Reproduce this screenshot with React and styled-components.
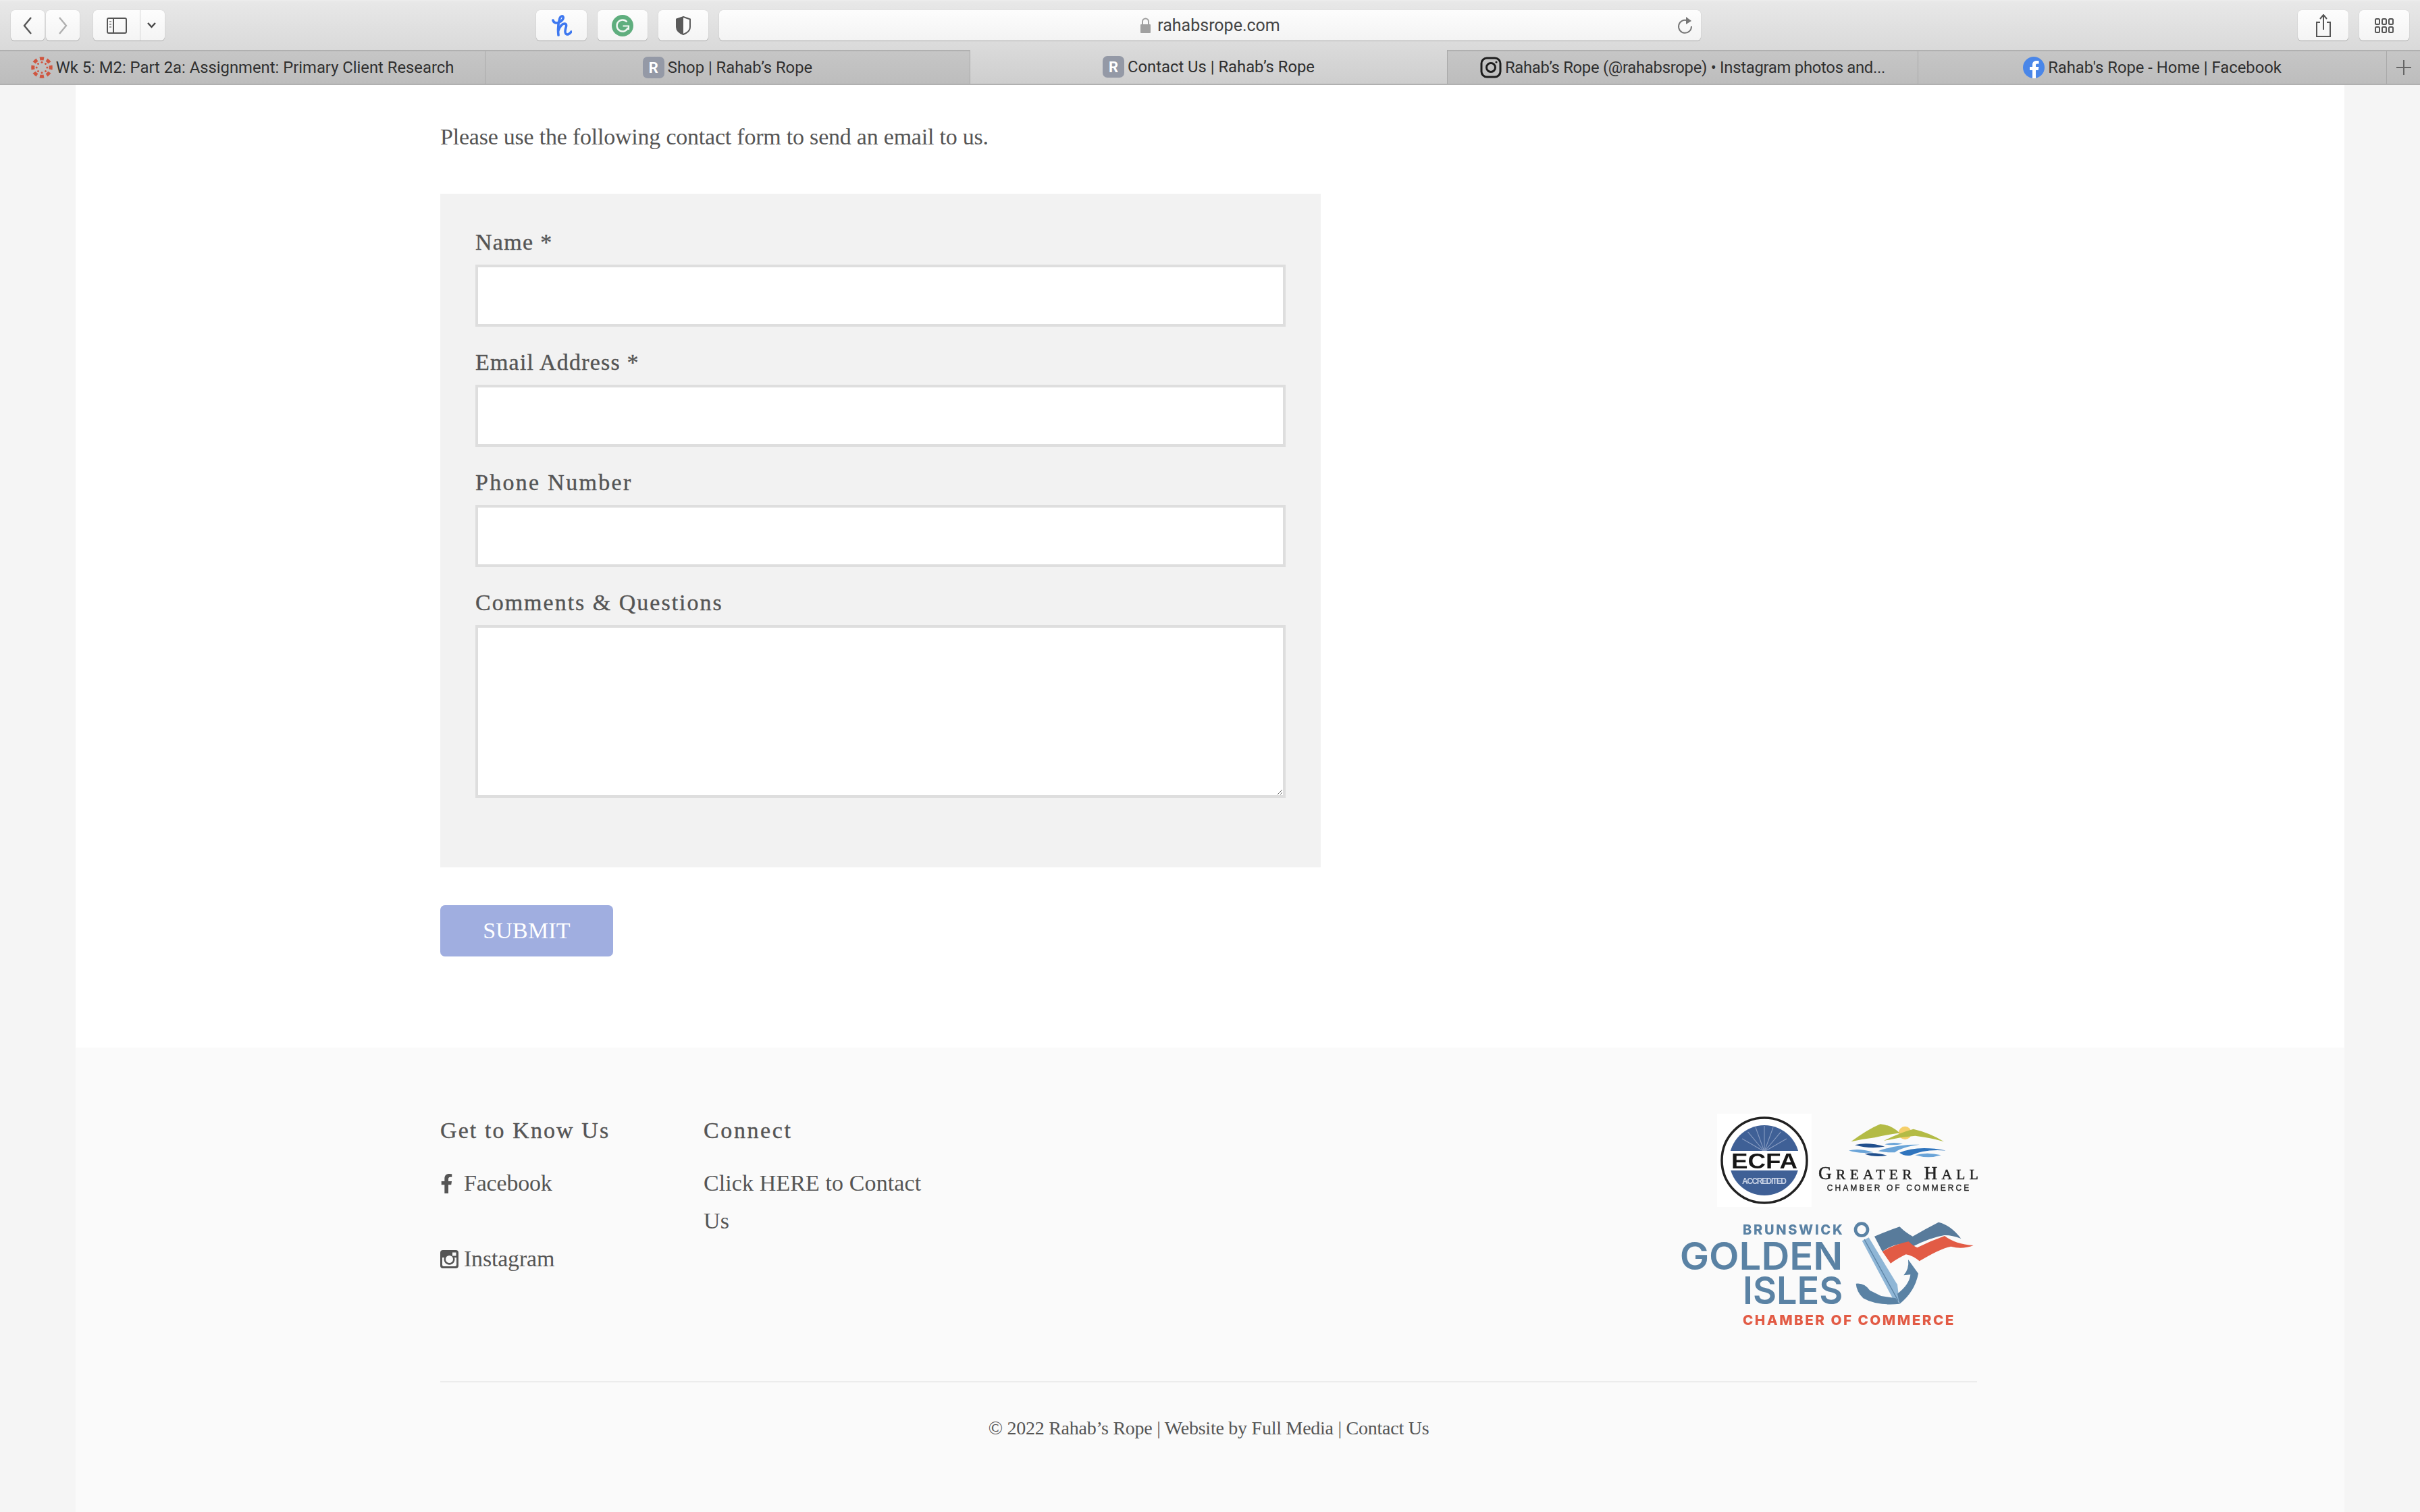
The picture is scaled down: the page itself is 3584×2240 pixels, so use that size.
import React from "react";
import styled, { createGlobalStyle } from "styled-components";
import { FaFacebookF } from "react-icons/fa";

const Global = createGlobalStyle`
  html, body { margin: 0; padding: 0; background: #f5f5f5; }
  * { box-sizing: border-box; }
`;

const Page = styled.div`
  width: 3584px;
  height: 2240px;
  overflow: hidden;
  display: flex;
  flex-direction: column;
  font-family: "Liberation Serif", serif;
  color: #555;
`;

const Chrome = styled.header`
  flex: none;
  height: 126px;
  display: flex;
  flex-direction: column;
  font-family: Roboto, "Liberation Sans", sans-serif;
  background: linear-gradient(#e8e8e8, #cfcfcf);
  border-top: 2px solid #ececec;
  border-bottom: 2px solid #b0b0b0;
`;

const Toolbar = styled.div`
  flex: none;
  height: 72px;
  padding: 13px 0 0 16px;
  display: flex;
  align-items: flex-start;
`;

const ToolButton = styled.div`
  flex: none;
  width: ${(p) => p.$w}px;
  height: 45px;
  margin-left: ${(p) => p.$ml || 0}px;
  display: flex;
  align-items: center;
  justify-content: center;
  background: linear-gradient(#fdfdfd, #f4f4f4);
  border-radius: 6px;
  box-shadow: 0 1px 1px #a8a8a8, 0 0 1px #bbb;
`;

const SplitPart = styled.div`
  height: 100%;
  width: ${(p) => p.$w}px;
  padding-right: ${(p) => (p.$divide ? "4px" : "0")};
  display: flex;
  align-items: center;
  justify-content: center;
  border-left: ${(p) => (p.$divide ? "1px solid #d5d5d5" : "none")};
`;

const UrlBar = styled.div`
  flex: none;
  position: relative;
  width: 1454px;
  height: 45px;
  margin-left: 16px;
  display: flex;
  align-items: center;
  justify-content: center;
  gap: 9px;
  background: linear-gradient(#fdfdfd, #f3f3f3);
  border-radius: 6px;
  box-shadow: 0 1px 1px #a8a8a8, 0 0 1px #bbb;
  font-size: 25px;
  color: #444;
`;

const Reload = styled.svg`
  position: absolute;
  right: 11px;
  top: 9px;
`;

const TabRow = styled.div`
  flex: 1;
  display: grid;
  grid-template-columns: 719px 718px 707px 697px 694px 1fr;
  border-top: 2px solid #b0b0b0;
`;

const Tab = styled.div`
  display: flex;
  align-items: center;
  justify-content: center;
  gap: 5px;
  font-size: 23.8px;
  letter-spacing: ${(p) => p.$track || 0}px;
  color: #303030;
  white-space: nowrap;
  background: ${(p) => (p.$active ? "linear-gradient(#d9d9d9, #cecece)" : "linear-gradient(#c6c6c6, #bdbdbd)")};
  border-right: 1px solid #a9a9a9;
  margin-top: ${(p) => (p.$active ? "-2px" : "0")};
`;

const RoundFav = styled.span`
  flex: none;
  width: 32px;
  height: 32px;
  border-radius: 7px;
  background: #9499a6;
  color: #fff;
  font-weight: 700;
  font-size: 22px;
  display: flex;
  align-items: center;
  justify-content: center;
`;

const AddTab = styled.div`
  background: linear-gradient(#c6c6c6, #bdbdbd);
  display: flex;
  align-items: center;
  justify-content: center;
`;

const Panel = styled.main`
  flex: none;
  width: 3360px;
  height: 1426px;
  margin-left: 112px;
  padding: 52px 540px 0;
  background: #fff;
`;

const Intro = styled.p`
  margin: 0 0 59px;
  font-size: 34px;
  line-height: 50px;
  letter-spacing: -0.22px;
`;

const FormBox = styled.form`
  width: 1304px;
  height: 998px;
  padding: 45px 52px 0;
  background: #f2f2f2;
  display: flex;
  flex-direction: column;
`;

const Label = styled.label`
  display: block;
  font-size: 34px;
  line-height: 54px;
  height: 60px;
  letter-spacing: ${(p) => p.$track}px;
  -webkit-text-stroke: 0.4px #555;
`;

const Field = styled.input`
  display: block;
  width: 1200px;
  height: 92px;
  margin-bottom: 26px;
  border: 4px solid #dedede;
  border-radius: 0;
  outline: none;
  background: #fff;
`;

const Comments = styled.textarea`
  display: block;
  width: 1200px;
  height: 256px;
  border: 4px solid #dedede;
  border-radius: 0;
  outline: none;
  background: #fff;
`;

const Submit = styled.button`
  display: block;
  width: 256px;
  height: 76px;
  margin-top: 56px;
  border: none;
  border-radius: 7px;
  background: #a0aee0;
  color: #fff;
  font-family: "Liberation Serif", serif;
  font-size: 34px;
  letter-spacing: 0.2px;
`;

const Footer = styled.footer`
  flex: none;
  width: 3360px;
  height: 688px;
  margin-left: 112px;
  padding: 95px 544px 0 540px;
  background: #fafafa;
`;

const FooterTop = styled.div`
  height: 401px;
  display: flex;
  border-bottom: 2px solid #ececec;
`;

const Column = styled.div`
  flex: none;
  width: ${(p) => p.$w}px;
`;

const ColHead = styled.h4`
  margin: 0 0 22px;
  font-size: 34px;
  line-height: 56px;
  font-weight: 400;
  letter-spacing: ${(p) => p.$track}px;
  -webkit-text-stroke: 0.4px #555;
`;

const SocialLink = styled.a`
  display: flex;
  align-items: center;
  height: 56px;
  margin-bottom: 56px;
  font-size: 34px;
  letter-spacing: -0.2px;
  color: #555;
`;

const IconSlot = styled.span`
  flex: none;
  width: 35px;
  display: flex;
  align-items: center;
`;

const FbGlyph = styled(FaFacebookF)`
  margin-left: -5px;
  color: #555;
`;

const ContactText = styled.p`
  margin: 0;
  font-size: 34px;
  line-height: 56px;
  letter-spacing: 0.1px;
`;

const Logos = styled.div`
  margin-left: auto;
  margin-right: -4px;
  margin-top: 3px;
  width: 446px;
  display: flex;
  flex-direction: column;
`;

const LogoRow = styled.div`
  display: flex;
  align-items: flex-start;
  padding-left: 57px;
  gap: 10px;
`;

const LogoSvg = styled.svg`
  flex: none;
  display: block;
  filter: blur(${(p) => p.$blur || 0.4}px);
`;

const HallSvg = styled(LogoSvg)`
  margin-top: 11px;
`;

const GoldenSvg = styled(LogoSvg)`
  margin-top: 22px;
`;

const Copyright = styled.p`
  margin: 0;
  padding-top: 43px;
  text-align: center;
  font-size: 28px;
  line-height: 50px;
  letter-spacing: -0.25px;
`;

function Chevron({ flip, color }) {
  return (
    <svg width="16" height="26" viewBox="0 0 16 26" fill="none">
      <path d={flip ? "M3 1l10 12L3 25" : "M13 1L3 13l10 12"} stroke={color} strokeWidth="2.4" />
    </svg>
  );
}

function HoneyIcon() {
  return (
    <svg width="30" height="33" viewBox="0 0 30 33" fill="none" stroke="#3e78f0" strokeWidth="3.6" strokeLinecap="round">
      <path d="M2 9c1 4 5 5 9 3 5-2 7-6 6-8-1-2-4-1-5 2-2 6-3 16-2 25" />
      <path d="M10 24c2-6 6-10 9-10 3 0 3 3 2 6-1 4-2 7 0 9 2 2 5 1 8-3" />
    </svg>
  );
}

function GrammarlyIcon() {
  return (
    <svg width="32" height="32" viewBox="0 0 32 32">
      <circle cx="16" cy="16" r="16" fill="#5fae7e" />
      <path d="M22.500 10.500A8.500 8.500 0 1 0 24 19" fill="none" stroke="#f4f8f5" strokeWidth="2.4" />
      <path d="M16.500 16.500H25V22" fill="none" stroke="#f4f8f5" strokeWidth="2.2" />
    </svg>
  );
}

function ShieldIcon() {
  return (
    <svg width="26" height="30" viewBox="0 0 26 30">
      <path d="M13 2l10 3.500V17q0 7-10 11Q3 24 3 17V5.500z" fill="#fbfbfb" stroke="#5a5a5a" strokeWidth="2" />
      <path d="M13 2L3 5.500V17q0 7 10 11z" fill="#5a5a5a" />
    </svg>
  );
}

function CanvasFav() {
  const spokes = [0, 45, 90, 135, 180, 225, 270, 315];
  return (
    <svg width="32" height="32" viewBox="0 0 32 32">
      {spokes.map((a) => (
        <g key={a} transform={`rotate(${a} 16 16)`} fill="#cf5640">
          <path d="M12.500 .5Q16 0 19.500 .5L18.500 5.500Q16 5 13.500 5.500z" />
          <circle cx="16" cy="8.200" r="1.500" />
        </g>
      ))}
    </svg>
  );
}

function InstaFav() {
  return (
    <svg width="32" height="32" viewBox="0 0 32 32" fill="none" stroke="#1d1d1d">
      <rect x="2" y="2" width="28" height="28" rx="8" strokeWidth="3" />
      <circle cx="16" cy="16" r="6.500" strokeWidth="3" />
      <circle cx="24" cy="8" r="1.600" fill="#1d1d1d" stroke="none" />
    </svg>
  );
}

function FacebookFav() {
  return (
    <svg width="32" height="32" viewBox="0 0 32 32">
      <circle cx="16" cy="16" r="16" fill="#4a86e8" />
      <path d="M14 32V20h-4v-5h4v-3c0-4 2.500-6 6-6h3.500v4.500H21c-1.500 0-2 .8-2 2V15h4.500l-.8 5H19v12z" fill="#fff" />
    </svg>
  );
}

function InstaOld() {
  return (
    <svg width="27" height="27" viewBox="0 0 27 27">
      <path fillRule="evenodd" fill="#555" d="M4 0h19a4 4 0 0 1 4 4v19a4 4 0 0 1-4 4H4a4 4 0 0 1-4-4V4a4 4 0 0 1 4-4zM3 11v11a2 2 0 0 0 2 2h17a2 2 0 0 0 2-2V11h-3a8 8 0 1 1-15 0zM18 3.500v5h5.500v-5zM13.500 8a5.500 5.500 0 1 0 0 11 5.500 5.500 0 0 0 0-11z" />
    </svg>
  );
}

function EcfaLogo() {
  return (
    <LogoSvg $blur={0.5} width="140" height="138" viewBox="0 0 140 138">
      <rect width="140" height="138" fill="#fff" />
      <circle cx="70" cy="69" r="63" fill="#fff" stroke="#222" strokeWidth="3.500" />
      <circle cx="70" cy="69" r="52" fill="#3f6096" />
      {[-60, -40, -20, 0, 20, 40, 60].map((a) => (
        <path key={a} d="M70 56V18" stroke="#8c9fc4" strokeWidth="1" transform={`rotate(${a} 70 56)`} />
      ))}
      <rect x="14" y="55" width="112" height="29" fill="#fff" />
      <text x="70" y="81" textAnchor="middle" fontFamily="Liberation Sans" fontWeight="700" fontSize="32" textLength="98" lengthAdjust="spacingAndGlyphs" fill="#161616">ECFA</text>
      <text x="70" y="104" textAnchor="middle" fontFamily="Liberation Sans" fontSize="12" fontWeight="700" textLength="66" fill="#c9d3e6">ACCREDITED</text>
    </LogoSvg>
  );
}

function HallLogo() {
  return (
    <HallSvg $blur={0.2} width="240" height="107" viewBox="700 100 720 320">
      <circle cx="1085" cy="152" r="29" fill="#f5cf6a" />
      <path d="M845 190Q920 135 975 112Q1020 115 1062 152Q1000 160 950 172Q900 178 845 190z" fill="#b3bb45" />
      <path d="M990 187Q1060 152 1122 135Q1190 150 1258 190Q1190 172 1130 165Q1060 170 990 187z" fill="#b3bb45" />
      <path d="M862 205Q920 190 995 212Q930 225 862 205zM905 245Q950 235 1005 252Q950 262 905 245z" fill="#1f4e8c" />
      <path d="M835 230Q880 218 945 238Q880 245 835 230zM995 202Q1030 190 1075 200Q1030 210 995 202zM965 232Q1060 200 1150 204Q1070 215 1040 238Q1000 240 965 232zM1130 250Q1180 235 1245 250Q1190 268 1130 250z" fill="#6aa4d8" />
      <path d="M1060 240Q1140 205 1268 230Q1170 222 1110 252Q1080 256 1060 240z" fill="#2f74bd" />
      <text x="700" y="358" fontFamily="Liberation Serif" fontSize="64" fill="#222" stroke="#222" strokeWidth="1.500" textLength="710" lengthAdjust="spacing">
        <tspan fontSize="82">G</tspan>REATER <tspan fontSize="82">H</tspan>ALL
      </text>
      <text x="738" y="410" fontFamily="Liberation Sans" fontSize="36" fill="#222" stroke="#222" strokeWidth="1" textLength="632" lengthAdjust="spacing">CHAMBER OF COMMERCE</text>
    </HallSvg>
  );
}

function GoldenLogo() {
  return (
    <GoldenSvg $blur={0.7} width="442" height="157" viewBox="80 540 1326 471">
      <g fontFamily="Inter" fill="#5a82a4">
        <text x="365" y="598" fontWeight="800" fontSize="60" textLength="443" lengthAdjust="spacing">BRUNSWICK</text>
        <text x="85" y="752" fontWeight="600" fontSize="168" textLength="725" lengthAdjust="spacingAndGlyphs">GOLDEN</text>
        <text x="365" y="905" fontWeight="600" fontSize="168" textLength="445" lengthAdjust="spacingAndGlyphs">ISLES</text>
      </g>
      <text x="365" y="1000" fontFamily="Inter" fontWeight="800" fontSize="62" fill="#e25b45" textLength="937" lengthAdjust="spacing">CHAMBER OF COMMERCE</text>
      <circle cx="893" cy="575" r="27" fill="none" stroke="#5a82a4" strokeWidth="14" />
      <path d="M895 625L925 610L1052 820L1062 900L1030 878z" fill="#8fb6d6" />
      <path d="M905 618L1055 890" stroke="#5a82a4" strokeWidth="4" />
      <path d="M868 815Q905 810 930 845L980 870L1045 880L1062 905Q960 915 900 880Q870 850 868 815z" fill="#5a82a4" />
      <path d="M1100 708L1145 770Q1130 850 1062 905L1052 860Q1105 820 1110 775L1080 778Q1105 750 1100 708z" fill="#5a82a4" />
      <path d="M950 605Q1010 580 1062 562Q1090 590 1120 605Q1180 570 1235 542Q1290 555 1335 615Q1290 598 1260 600Q1200 610 1120 650Q1060 620 985 672z" fill="#587b9b" />
      <path d="M985 672Q1040 640 1102 628Q1125 650 1140 655Q1200 625 1262 603Q1310 640 1390 645Q1340 665 1290 650Q1240 660 1150 715Q1120 690 1090 685Q1050 705 1022 725z" fill="#e25b45" />
    </GoldenSvg>
  );
}

export default function App() {
  return (
    <Page>
      <Global />
      <Chrome>
        <Toolbar>
          <ToolButton $w={50}><Chevron color="#555" /></ToolButton>
          <ToolButton $w={50} $ml={2}><Chevron flip color="#b0b0b0" /></ToolButton>
          <ToolButton $w={106} $ml={20}>
            <SplitPart $w={69}>
              <svg width="30" height="24" viewBox="0 0 30 24" fill="none" stroke="#555" strokeWidth="2">
                <rect x="1" y="1" width="28" height="22" rx="2" />
                <path d="M10 1v22" />
                <path d="M4 6h3M4 10h3M4 14h3" stroke="#999" />
              </svg>
            </SplitPart>
            <SplitPart $w={37} $divide>
              <svg width="13" height="9" viewBox="0 0 13 9" fill="none" stroke="#444" strokeWidth="2.400"><path d="M1 1l5.500 6L12 1" /></svg>
            </SplitPart>
          </ToolButton>
          <ToolButton $w={75} $ml={550}><HoneyIcon /></ToolButton>
          <ToolButton $w={74} $ml={16}><GrammarlyIcon /></ToolButton>
          <ToolButton $w={74} $ml={16}><ShieldIcon /></ToolButton>
          <UrlBar>
            <svg width="17" height="24" viewBox="0 0 17 24">
              <path d="M4 10V6a4.500 4.500 0 0 1 9 0v4" fill="none" stroke="#a0a0a0" strokeWidth="2" />
              <rect x="1" y="10" width="15" height="13" rx="1" fill="#a0a0a0" />
            </svg>
            rahabsrope.com
            <Reload width="24" height="28" viewBox="0 0 24 28" fill="none">
              <path d="M15 6.500A9.500 9.500 0 1 0 21 15" stroke="#777" strokeWidth="2" />
              <path d="M13 1l8 6-8 5z" fill="#777" />
            </Reload>
          </UrlBar>
          <ToolButton $w={75} $ml={884}>
            <svg width="24" height="34" viewBox="0 0 24 34" fill="none" stroke="#555" strokeWidth="2">
              <path d="M7 12H2v21h20V12h-5" />
              <path d="M12 23V2M7 7l5-6 5 6" />
            </svg>
          </ToolButton>
          <ToolButton $w={74} $ml={16}>
            <svg width="28" height="24" viewBox="0 0 28 24" fill="none" stroke="#555" strokeWidth="2">
              <rect x="1" y="2" width="6" height="8" rx="1.500" />
              <rect x="11" y="2" width="6" height="8" rx="1.500" />
              <rect x="21" y="2" width="6" height="8" rx="1.500" />
              <rect x="1" y="14" width="6" height="8" rx="1.500" />
              <rect x="11" y="14" width="6" height="8" rx="1.500" />
              <rect x="21" y="14" width="6" height="8" rx="1.500" />
            </svg>
          </ToolButton>
        </Toolbar>
        <TabRow>
          <Tab><CanvasFav />Wk 5: M2: Part 2a: Assignment: Primary Client Research</Tab>
          <Tab><RoundFav>R</RoundFav>Shop | Rahab’s Rope</Tab>
          <Tab $active><RoundFav>R</RoundFav>Contact Us | Rahab’s Rope</Tab>
          <Tab $track={-0.26}><InstaFav />Rahab’s Rope (@rahabsrope) • Instagram photos and...</Tab>
          <Tab><FacebookFav />Rahab's Rope - Home | Facebook</Tab>
          <AddTab>
            <svg width="24" height="24" viewBox="0 0 24 24" stroke="#666" strokeWidth="2"><path d="M12 1v22M1 12h22" /></svg>
          </AddTab>
        </TabRow>
      </Chrome>

      <Panel>
        <Intro>Please use the following contact form to send an email to us.</Intro>
        <FormBox>
          <Label $track={1.3}>Name *</Label>
          <Field type="text" />
          <Label $track={1.2}>Email Address *</Label>
          <Field type="email" />
          <Label $track={2.3}>Phone Number</Label>
          <Field type="tel" />
          <Label $track={2}>Comments &amp; Questions</Label>
          <Comments />
        </FormBox>
        <Submit type="button">SUBMIT</Submit>
      </Panel>

      <Footer>
        <FooterTop>
          <Column $w={390}>
            <ColHead $track={2.1}>Get to Know Us</ColHead>
            <SocialLink><IconSlot><FbGlyph size={29} /></IconSlot>Facebook</SocialLink>
            <SocialLink><IconSlot><InstaOld /></IconSlot>Instagram</SocialLink>
          </Column>
          <Column $w={340}>
            <ColHead $track={2.6}>Connect</ColHead>
            <ContactText>Click HERE to Contact Us</ContactText>
          </Column>
          <Logos>
            <LogoRow>
              <EcfaLogo />
              <HallLogo />
            </LogoRow>
            <GoldenLogo />
          </Logos>
        </FooterTop>
        <Copyright>© 2022 Rahab’s Rope | Website by Full Media | Contact Us</Copyright>
      </Footer>
    </Page>
  );
}
